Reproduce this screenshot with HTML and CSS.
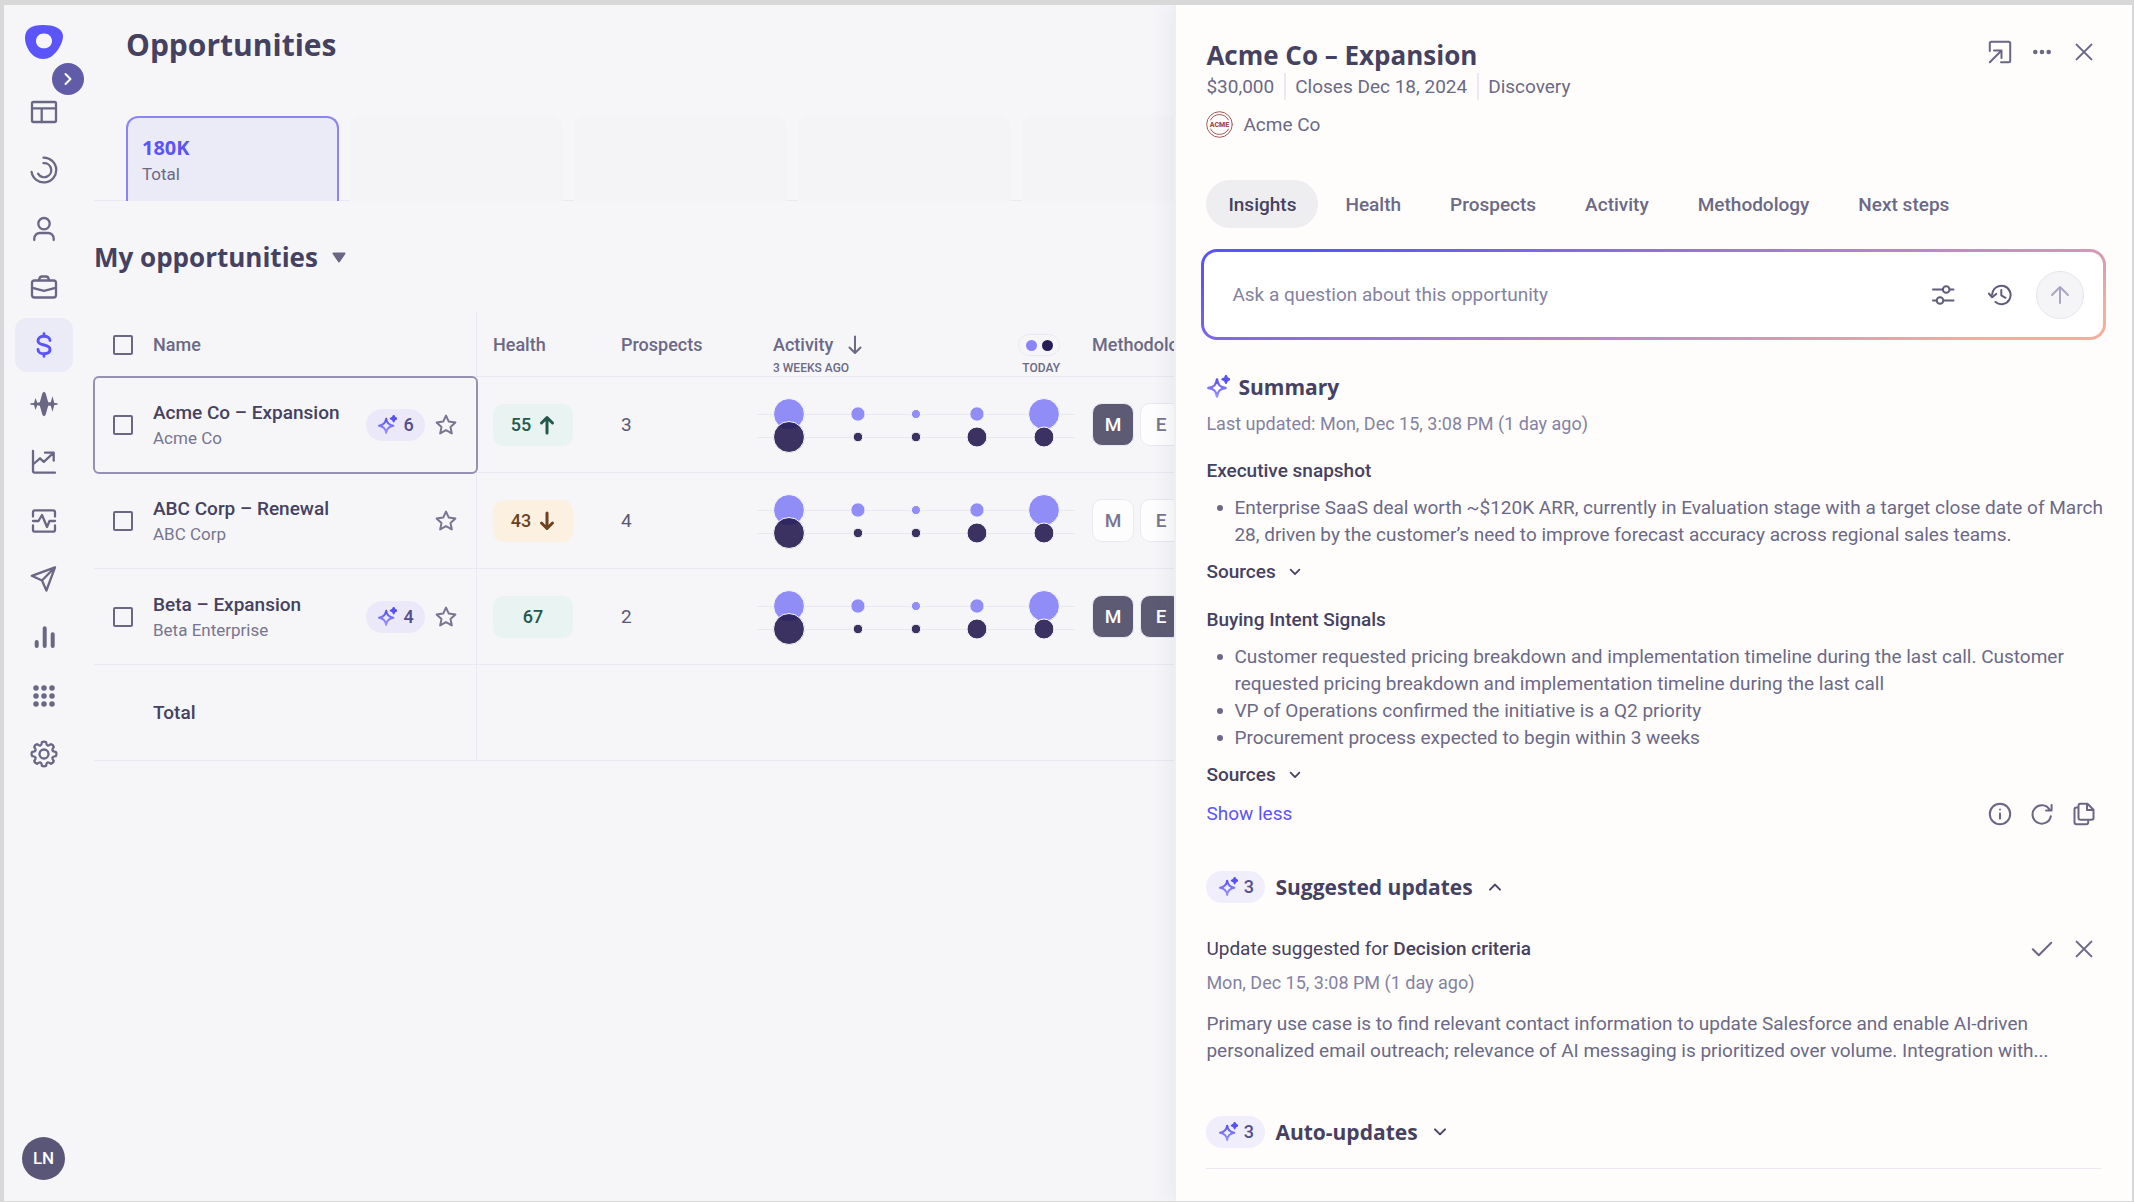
FILE: index.html
```html
<!DOCTYPE html>
<html lang="en">
<head>
    <meta charset="UTF-8">
    <meta name="viewport" content="width=device-width, initial-scale=1.0">
    <title>Opportunities</title>
    <link rel="stylesheet" href="styles.css">
</head>
<body>
    <!-- Shared icons -->
    <svg class="sprite" aria-hidden="true">
        <defs>
            <linearGradient id="spark-fill" x1="0" y1="0" x2="0" y2="24" gradientUnits="userSpaceOnUse">
                <stop offset="0.2" stop-color="#5951f6"/>
                <stop offset="1" stop-color="#a89ffb"/>
            </linearGradient>
        </defs>
        <symbol id="i-spark" viewBox="0 0 24 24">
            <path d="M11 4.5C11.8 10 14 12.2 19.6 13 14 13.8 11.8 16 11 21.6 10.2 16 8 13.8 2.4 13 8 12.2 10.2 10 11 4.5Z" fill="none" stroke="url(#spark-fill)" stroke-width="2.4" stroke-linejoin="round"/>
            <path d="M20 .6Q20.6 3.7 23.7 4.3 20.6 4.9 20 8 19.4 4.9 16.3 4.3 19.4 3.7 20 .6Z" fill="#5951f6" stroke="#5951f6" stroke-linejoin="round"/>
        </symbol>
        <symbol id="i-star" viewBox="0 0 24 24">
            <path d="M12 2.6l2.8 6 6.6.8-4.9 4.5 1.3 6.5-5.8-3.2-5.8 3.2 1.3-6.5L2.6 9.4l6.6-.8z"/>
        </symbol>
        <symbol id="i-close" viewBox="0 0 24 24"><path d="M4.6 4.6l14.8 14.8M19.4 4.6L4.6 19.4"/></symbol>
        <symbol id="i-down" viewBox="0 0 16 16"><path d="M3 5.4l5 5 5-5"/></symbol>
        <symbol id="i-up" viewBox="0 0 16 16"><path d="M3 10.6l5-5 5 5"/></symbol>
        <symbol id="i-activity" viewBox="0 0 318 60">
            <path d="M0 19.5h318M0 42.5h318" stroke="#e8e8f0"/>
            <g fill="#918df7" stroke="#f9f9fc">
                <circle cx="32" cy="19" r="15.5"/>
                <circle cx="101" cy="19" r="7.2"/>
                <circle cx="159" cy="19" r="4.6"/>
                <circle cx="220" cy="19" r="7.2"/>
                <circle cx="287" cy="19" r="15.5"/>
            </g>
            <g fill="#3b3262" stroke="#f9f9fc">
                <circle cx="32" cy="42" r="15.5"/>
                <circle cx="101" cy="42" r="4.8"/>
                <circle cx="159" cy="42" r="4.8"/>
                <circle cx="220" cy="42" r="10"/>
                <circle cx="287" cy="42" r="10"/>
            </g>
            <path d="M22 31.5a15 15 0 0 1 20 0q-10 5-20 0z" fill="#2f2763" stroke="none"/>
        </symbol>
    </svg>

    <div class="app">
        <aside class="sidebar">
            <a href="#" class="logo" aria-label="Home">
                <svg width="38" height="34" viewBox="0 0 38 34"><path fill="#5b54f8" fill-rule="evenodd" d="M0 13C0 4 6 0 18 0c10 0 20 3 20 11 0 5-3 11-6 15-4 5-8 8-14 8C7 34 0 22 0 13Zm11 3c0 4 3 7.300 8 7.300s8-3.300 8-7.300-3-7.500-8-7.500-8 3.500-8 7.500Z"/></svg>
            </a>
            <button type="button" class="expand-btn" aria-label="Expand menu">
                <svg width="16" height="16" viewBox="0 0 16 16"><path d="M5.500 3l5 5-5 5"/></svg>
            </button>
            <nav class="nav">
                <a href="#" aria-label="Dashboard"><svg viewBox="0 0 28 28"><rect x="2" y="4" width="24" height="20" rx="1.500"/><path d="M2 10.300h24M11.700 10.300V24"/></svg></a>
                <a href="#" aria-label="Goals"><svg viewBox="0 0 28 28"><path d="M13.500 1.600A12.400 12.400 0 1 1 1.600 15.800M13.500 7.200A7 7 0 1 1 8.200 17.800"/></svg></a>
                <a href="#" aria-label="People"><svg viewBox="0 0 28 28"><circle cx="14" cy="8.700" r="5.700"/><path d="M4.300 25v-1.500a5.500 5.500 0 0 1 5.500-5.500h8.400a5.500 5.500 0 0 1 5.500 5.500V25"/></svg></a>
                <a href="#" aria-label="Accounts"><svg viewBox="0 0 28 28"><rect x="2" y="7.500" width="24" height="17" rx="2.500"/><path d="M9 7q.5-3.500 3-3.500h4q2.500 0 3 3.500M2.500 14.800L14 17.800l11.500-3"/></svg></a>
                <a href="#" class="active" aria-label="Opportunities" aria-current="page"><svg viewBox="0 0 28 28"><path stroke-width="2.900" d="M14 2.800v2.500M14 22.700v2.500M20 9.600C20 7 17.500 5.300 14 5.300S8 7 8 9.700s2.500 3.600 6 4.300 6 1.800 6 4.500-2.500 4.200-6 4.200-6-1.700-6-4.300"/></svg></a>
                <a href="#" aria-label="Conversations"><svg viewBox="0 0 28 28"><path class="solid" d="M.5 13.300L4 13 5.500 8 7.300 12.800 9.800 12.300 12.300 3.500Q14 0 15.700 3.500L18.200 12.300 20.700 12.300 22.500 6.300 24.300 13 27.500 13.300V14.700L24.300 15 22.500 21.700 20.700 15.700 18.200 15.700 15.700 24.500Q14 28 12.300 24.500L9.800 15.700 7.300 15.200 5.500 20 4 15 .5 14.700Z"/></svg></a>
                <a href="#" aria-label="Forecast"><svg viewBox="0 0 28 28"><path d="M3 3v19.700q0 2 2 2h20M3.500 16l6.500-5.700 3.800 3.500L23.700 4.700M15 4.700h8.700v8"/></svg></a>
                <a href="#" aria-label="Deals"><svg viewBox="0 0 28 28"><path d="M3 9.500V5.300q0-2 2-2h18q2 0 2 2v4.200M3 18.500v4.200q0 2 2 2h18q2 0 2-2v-4.200M3 14h5.500L12 8l5 12 2.500-6H25"/></svg></a>
                <a href="#" aria-label="Outreach"><svg viewBox="0 0 28 28"><path d="M25 2.300L1.800 10.800 12 15.500l4.400 10zM25 2.300L12 15.500"/></svg></a>
                <a href="#" aria-label="Reports"><svg viewBox="0 0 28 28"><path stroke-width="4" d="M6.700 19v4M14.700 5.300V23M22.700 11.300V23"/></svg></a>
                <a href="#" aria-label="Apps"><svg viewBox="0 0 28 28"><path stroke-width="5.500" d="M6 6h0M14 6h0M22 6h0M6 14h0M14 14h0M22 14h0M6 22h0M14 22h0M22 22h0"/></svg></a>
                <a href="#" aria-label="Settings"><svg viewBox="0 0 28 28"><path d="M11.900 2.200A4 4 0 0 1 16.100 2.200Q16.500 7.800 20.900 4.200A4 4 0 0 1 23.800 7.100Q20.200 11.500 25.800 11.900A4 4 0 0 1 25.800 16.100Q20.200 16.500 23.800 20.900A4 4 0 0 1 20.900 23.800Q16.500 20.200 16.100 25.800A4 4 0 0 1 11.900 25.800Q11.500 20.200 7.100 23.800A4 4 0 0 1 4.200 20.900Q7.800 16.500 2.200 16.100A4 4 0 0 1 2.200 11.900Q7.800 11.500 4.200 7.100A4 4 0 0 1 7.100 4.200Q11.500 7.800 11.900 2.200Z"/><circle cx="14" cy="14" r="4.500"/></svg></a>
            </nav>
            <button type="button" class="avatar">LN</button>
        </aside>

        <main class="main">
            <h1>Opportunities</h1>
            <div class="cards">
                <div class="card active">
                    <strong>180K</strong>
                    <span>Total</span>
                </div>
                <div class="card"></div>
                <div class="card"></div>
                <div class="card"></div>
                <div class="card"></div>
            </div>

            <h2>
                <button type="button" class="view-btn">My opportunities
                    <svg width="14" height="11" viewBox="0 0 14 11"><path d="M1.500 1.500h11L7 9.500z"/></svg>
                </button>
            </h2>

            <table>
                <colgroup>
                    <col class="col-name"><col class="col-health"><col class="col-prospects"><col class="col-activity"><col>
                </colgroup>
                <thead>
                    <tr>
                        <th class="name-cell">
                            <div class="name-wrap">
                                <input type="checkbox" aria-label="Select all">
                                <span>Name</span>
                            </div>
                        </th>
                        <th>Health</th>
                        <th>Prospects</th>
                        <th>
                            <div class="activity-head">
                                <span>Activity</span>
                                <svg width="16" height="20" viewBox="0 0 16 20"><path d="M8 1.500v16M2.500 12.500L8 18l5.500-5.500"/></svg>
                                <button type="button" class="legend" aria-label="Toggle activity"><i></i><i></i></button>
                            </div>
                            <div class="activity-scale"><span>3 WEEKS AGO</span><span>TODAY</span></div>
                        </th>
                        <th>Methodology</th>
                    </tr>
                </thead>
                <tbody>
                    <tr>
                        <td class="name-cell selected">
                            <div class="name-wrap">
                                <input type="checkbox" aria-label="Select Acme Co – Expansion">
                                <div class="deal"><strong>Acme Co – Expansion</strong><span>Acme Co</span></div>
                                <span class="pill"><svg><use href="#i-spark"/></svg>6</span>
                                <button type="button" class="star" aria-label="Favorite"><svg><use href="#i-star"/></svg></button>
                            </div>
                        </td>
                        <td><span class="health good">55 <svg viewBox="0 0 16 20"><path d="M8 18V2.500M2.500 8L8 2.500 13.500 8"/></svg></span></td>
                        <td class="count">3</td>
                        <td class="activity-cell"><svg><use href="#i-activity"/></svg></td>
                        <td><div class="chips"><span class="chip on">M</span><span class="chip">E</span></div></td>
                    </tr>
                    <tr>
                        <td class="name-cell">
                            <div class="name-wrap">
                                <input type="checkbox" aria-label="Select ABC Corp – Renewal">
                                <div class="deal"><strong>ABC Corp – Renewal</strong><span>ABC Corp</span></div>
                                <button type="button" class="star" aria-label="Favorite"><svg><use href="#i-star"/></svg></button>
                            </div>
                        </td>
                        <td><span class="health warn">43 <svg viewBox="0 0 16 20"><path d="M8 2v15.500M2.500 12L8 17.500l5.500-5.500"/></svg></span></td>
                        <td class="count">4</td>
                        <td class="activity-cell"><svg><use href="#i-activity"/></svg></td>
                        <td><div class="chips"><span class="chip">M</span><span class="chip">E</span></div></td>
                    </tr>
                    <tr>
                        <td class="name-cell">
                            <div class="name-wrap">
                                <input type="checkbox" aria-label="Select Beta – Expansion">
                                <div class="deal"><strong>Beta – Expansion</strong><span>Beta Enterprise</span></div>
                                <span class="pill"><svg><use href="#i-spark"/></svg>4</span>
                                <button type="button" class="star" aria-label="Favorite"><svg><use href="#i-star"/></svg></button>
                            </div>
                        </td>
                        <td><span class="health good">67</span></td>
                        <td class="count">2</td>
                        <td class="activity-cell"><svg><use href="#i-activity"/></svg></td>
                        <td><div class="chips"><span class="chip on">M</span><span class="chip on">E</span></div></td>
                    </tr>
                    <tr>
                        <td class="name-cell total"><strong>Total</strong></td>
                        <td></td>
                        <td></td>
                        <td></td>
                        <td></td>
                    </tr>
                </tbody>
            </table>
        </main>

        <section class="panel">
            <header class="panel-header">
                <div>
                    <h2>Acme Co – Expansion</h2>
                    <ul class="meta">
                        <li>$30,000</li>
                        <li>Closes Dec 18, 2024</li>
                        <li>Discovery</li>
                    </ul>
                    <div class="account">
                        <svg width="27" height="27" viewBox="0 0 27 27">
                            <circle cx="13.500" cy="13.500" r="12.800"/>
                            <path d="M4.500 9a10.200 10.200 0 0 1 18 0M4.500 18a10.200 10.200 0 0 0 18 0"/>
                            <text x="13.500" y="16" text-anchor="middle">ACME</text>
                        </svg>
                        Acme Co
                    </div>
                </div>
                <div class="actions">
                    <button type="button" aria-label="Open record"><svg viewBox="0 0 24 24"><path d="M1.800 11V3.300q0-1.500 1.500-1.500h17.400q1.500 0 1.500 1.500v17.400q0 1.500-1.500 1.500H13M1.800 22.200L13.500 10.500M6 10.500h7.500V18"/></svg></button>
                    <button type="button" aria-label="More"><svg viewBox="0 0 24 24"><path stroke-width="4.600" d="M5.300 12h0M12 12h0M18.700 12h0"/></svg></button>
                    <button type="button" aria-label="Close"><svg><use href="#i-close"/></svg></button>
                </div>
            </header>

            <div class="tabs" role="tablist">
                <button type="button" role="tab" class="active" aria-selected="true">Insights</button>
                <button type="button" role="tab">Health</button>
                <button type="button" role="tab">Prospects</button>
                <button type="button" role="tab">Activity</button>
                <button type="button" role="tab">Methodology</button>
                <button type="button" role="tab">Next steps</button>
            </div>

            <form class="ask">
                <input type="text" placeholder="Ask a question about this opportunity" aria-label="Ask a question about this opportunity">
                <button type="button" aria-label="Filters"><svg viewBox="0 0 24 24"><path d="M2 6.500h9.500M19 6.500h3.500M2 17.500h3.500M13 17.500h9.500"/><circle cx="15.200" cy="6.500" r="3.300"/><circle cx="9" cy="17.500" r="3.300"/></svg></button>
                <button type="button" aria-label="History"><svg viewBox="0 0 24 24"><path d="M4.200 11.500A9.200 9.200 0 1 1 7.500 19M.8 10.500l3.400 3.800 4-3.400M13.300 7v5.300l4.200 2.500"/></svg></button>
                <button type="submit" class="send" aria-label="Send"><svg viewBox="0 0 24 24"><path d="M12 20V4M4 12l8-8 8 8"/></svg></button>
            </form>

            <h3 class="summary-title"><svg><use href="#i-spark"/></svg>Summary</h3>
            <p class="date">Last updated: Mon, Dec 15, 3:08 PM (1 day ago)</p>

            <h4>Executive snapshot</h4>
            <ul class="points">
                <li>Enterprise SaaS deal worth ~$120K ARR, currently in Evaluation stage with a target close date of March 28, driven by the customer’s need to improve forecast accuracy across regional sales teams.</li>
            </ul>
            <button type="button" class="sources">Sources <svg><use href="#i-down"/></svg></button>

            <h4>Buying Intent Signals</h4>
            <ul class="points">
                <li>Customer requested pricing breakdown and implementation timeline during the last call. Customer requested pricing breakdown and implementation timeline during the last call</li>
                <li>VP of Operations confirmed the initiative is a Q2 priority</li>
                <li>Procurement process expected to begin within 3 weeks</li>
            </ul>
            <button type="button" class="sources">Sources <svg><use href="#i-down"/></svg></button>

            <div class="summary-footer">
                <a href="#">Show less</a>
                <div class="actions">
                    <button type="button" aria-label="Info"><svg viewBox="0 0 24 24"><circle cx="12" cy="12" r="10.200"/><path d="M12 11.500v5M12 7.500h0"/></svg></button>
                    <button type="button" aria-label="Refresh"><svg viewBox="0 0 24 24"><path d="M20.800 14.200A9.200 9.200 0 1 1 19.500 7.500M21.600 3v5.500h-5.500"/></svg></button>
                    <button type="button" aria-label="Copy"><svg viewBox="0 0 24 24"><path d="M8.500 1.800h7l6 6v8q0 2-2 2h-11q-2 0-2-2v-12q0-2 2-2zM15 2v6h6M6.500 5.500H4.500q-2 0-2 2v12.700q0 2 2 2h9.700q2 0 2-2v-1.700"/></svg></button>
                </div>
            </div>

            <h3 class="group-title"><span class="pill"><svg><use href="#i-spark"/></svg>3</span><button type="button">Suggested updates <svg><use href="#i-up"/></svg></button></h3>
            <div class="update">
                <div class="update-head">
                    <p>Update suggested for <strong>Decision criteria</strong></p>
                    <div class="actions">
                        <button type="button" aria-label="Accept"><svg viewBox="0 0 24 24"><path d="M2.800 12.200l6 6L21.200 5.800"/></svg></button>
                        <button type="button" aria-label="Dismiss"><svg><use href="#i-close"/></svg></button>
                    </div>
                </div>
                <p class="date">Mon, Dec 15, 3:08 PM (1 day ago)</p>
                <p class="update-text">Primary use case is to find relevant contact information to update Salesforce and enable AI-driven personalized email outreach; relevance of AI messaging is prioritized over volume. Integration with...</p>
            </div>

            <h3 class="group-title last"><span class="pill"><svg><use href="#i-spark"/></svg>3</span><button type="button">Auto-updates <svg><use href="#i-down"/></svg></button></h3>
        </section>
    </div>
</body>
</html>
```
FILE: styles.css
```css
:root {
    --ink: #454161;
    --text: #6b6986;
    --muted: #8482a0;
    --line: #e9e9f1;
    --accent: #5b54f8;
    --bg: #f6f6f9;
    --heading: "Open Sans", "Noto Sans", sans-serif;
}

* {
    margin: 0;
    padding: 0;
    box-sizing: border-box;
}

body {
    background: #d8d8d8;
    color: var(--text);
    font-family: Roboto, "Liberation Sans", sans-serif;
    font-size: 19px;
    line-height: 27px;
    min-height: 100vh;
    padding: 5px 2px 1px 4px;
    display: flex;
}

button {
    background: none;
    border: none;
    color: inherit;
    font: inherit;
    cursor: pointer;
}

a {
    color: var(--accent);
    text-decoration: none;
}

ul {
    list-style: none;
}

strong {
    font-weight: 500;
}

svg {
    display: block;
    flex: none;
    fill: none;
    stroke: currentColor;
    stroke-width: 2;
    stroke-linecap: round;
    stroke-linejoin: round;
}

.sprite {
    position: absolute;
    width: 0;
    height: 0;
}

.app {
    flex: 1;
    display: flex;
    background: var(--bg);
    overflow: hidden;
}

/* Sidebar */
.sidebar {
    position: relative;
    flex: 0 0 79px;
    display: flex;
    flex-direction: column;
    align-items: center;
    padding: 20px 0 21px;
}

.logo svg {
    stroke: none;
}

.expand-btn {
    position: absolute;
    top: 58px;
    left: 48px;
    width: 32px;
    height: 32px;
    border-radius: 50%;
    background: #605ca8;
    color: white;
    display: flex;
    align-items: center;
    justify-content: center;
}

.nav {
    margin-top: 26px;
    height: 696px;
    display: flex;
    flex-direction: column;
    justify-content: space-between;
}

.nav a {
    width: 58px;
    height: 54px;
    border-radius: 12px;
    color: #6a6785;
    display: flex;
    align-items: center;
    justify-content: center;
}

.nav a.active {
    background: #ebebf8;
    color: var(--accent);
}

.nav svg {
    width: 28px;
    height: 28px;
    stroke-width: 2.3;
}

.nav .solid {
    fill: currentColor;
    stroke: none;
}

.avatar {
    margin-top: auto;
    width: 43px;
    height: 43px;
    border-radius: 50%;
    background: #595678;
    color: white;
    font-size: 17px;
    font-weight: 500;
}

/* Main */
.main {
    flex: 1;
    min-width: 0;
    overflow: hidden;
    padding: 19px 0 0 11px;
}

h1 {
    color: var(--ink);
    font-family: var(--heading);
    font-size: 30px;
    font-weight: 700;
    line-height: 42px;
    padding-left: 32px;
}

.cards {
    margin-top: 50px;
    padding-left: 32px;
    display: flex;
    gap: 11px;
    box-shadow: inset 0 -1px var(--line);
}

.card {
    flex: 0 0 213px;
    height: 85px;
    background: #f4f4f6;
    border-radius: 12px 12px 0 0;
}

.card.active {
    background: #ebebf8;
    border: 2px solid #8a84f9;
    border-bottom: none;
    padding: 16px 14px;
    display: flex;
    flex-direction: column;
}

.card strong {
    color: var(--accent);
    font-family: var(--heading);
    font-size: 20px;
    font-weight: 700;
    line-height: 28px;
}

.card span {
    font-size: 17px;
    line-height: 24px;
}

.main h2 {
    margin-top: 38px;
}

.view-btn,
.panel-header h2 {
    color: var(--ink);
    font-family: var(--heading);
    font-size: 26px;
    font-weight: 700;
    line-height: 36px;
}

.view-btn {
    display: flex;
    align-items: center;
    gap: 14px;
}

.view-btn svg {
    fill: #6a6785;
    stroke: #6a6785;
}

table {
    width: 100%;
    margin-top: 37px;
    table-layout: fixed;
    border-collapse: separate;
    border-spacing: 0;
}

.col-name { width: 383px; }
.col-health { width: 128px; }
.col-prospects { width: 152px; }
.col-activity { width: 319px; }

th,
td {
    border-bottom: 1px solid var(--line);
    padding: 0 0 0 16px;
    text-align: left;
    white-space: nowrap;
    overflow: hidden;
}

th {
    height: 65px;
    padding-top: 21px;
    vertical-align: top;
    font-size: 18px;
    font-weight: 500;
    line-height: 24px;
}

td {
    height: 96px;
    vertical-align: middle;
}

.name-cell {
    border-right: 1px solid var(--line);
    padding-left: 19px;
    padding-right: 18px;
}

.name-cell.selected {
    border-radius: 5px;
    outline: 2px solid #9492b0;
    outline-offset: -1px;
}

.name-cell.total {
    padding-left: 59px;
}

.name-cell strong {
    color: var(--ink);
}

.name-wrap {
    display: flex;
    align-items: center;
}

input[type="checkbox"] {
    appearance: none;
    width: 20px;
    height: 20px;
    margin-right: 20px;
    border: 2px solid #6a6785;
    border-radius: 2px;
}

.deal {
    flex: 1;
    display: flex;
    flex-direction: column;
}

.deal span {
    color: #77758f;
    font-size: 17px;
    line-height: 24px;
}

.pill {
    width: 59px;
    height: 32px;
    border-radius: 16px;
    background: #ebe9f9;
    color: #524d8c;
    font-family: Roboto, "Liberation Sans", sans-serif;
    font-size: 18px;
    font-weight: 500;
    display: flex;
    align-items: center;
    justify-content: center;
    gap: 6px;
}

.pill svg {
    width: 20px;
    height: 20px;
}

.star {
    margin-left: 9px;
    color: #77758f;
}

.star svg {
    width: 24px;
    height: 24px;
}

.health {
    width: 80px;
    height: 42px;
    border-radius: 10px;
    font-size: 18px;
    font-weight: 500;
    display: flex;
    align-items: center;
    justify-content: center;
    gap: 8px;
}

.health svg {
    width: 16px;
    height: 20px;
    stroke-width: 3;
}

.good {
    background: #e9f3f1;
    color: #23594b;
}

.warn {
    background: #fcf1e1;
    color: #6b4120;
}

.count {
    color: #5a5776;
}

.activity-head {
    display: flex;
    align-items: center;
    height: 24px;
    padding-right: 16px;
}

.activity-head svg {
    margin-left: 14px;
}

.legend {
    margin-left: auto;
    width: 42px;
    height: 22px;
    border: 1px solid var(--line);
    border-radius: 11px;
    display: flex;
    align-items: center;
    justify-content: center;
    gap: 5px;
}

.legend i {
    width: 11px;
    height: 11px;
    border-radius: 50%;
    background: #8a84f9;
}

.legend i + i {
    background: #281e57;
}

.activity-scale {
    display: flex;
    justify-content: space-between;
    margin-top: 4px;
    padding-right: 16px;
    font-size: 12px;
    line-height: 14px;
}

.activity-cell {
    padding-left: 0;
}

.activity-cell svg {
    width: 318px;
    height: 60px;
    stroke-width: 1;
}

.chips {
    display: flex;
    gap: 6px;
}

.chip {
    flex: 0 0 42px;
    height: 43px;
    border: 1px solid var(--line);
    border-radius: 10px;
    background: #fdfdfe;
    color: #77758f;
    font-weight: 500;
    display: flex;
    align-items: center;
    justify-content: center;
}

.chip.on {
    background: #5d5b73;
    color: white;
}

/* Panel */
.panel {
    position: relative;
    flex: 0 0 45%;
    border-left: 2px solid #ededf4;
    background: #fefdfc;
    box-shadow: -4px 0 20px rgba(60, 56, 100, 0.08);
    padding: 32px 31px 32px 30px;
}

.panel-header {
    display: flex;
    justify-content: space-between;
    align-items: flex-start;
}

.meta {
    display: flex;
}

.meta li + li {
    border-left: 2px solid var(--line);
    margin-left: 10px;
    padding-left: 9px;
}

.account {
    display: flex;
    align-items: center;
    gap: 10px;
    margin-top: 11px;
}

.account svg {
    stroke: #a05a57;
    stroke-width: 1;
}

.account text {
    fill: #9c4a48;
    stroke: none;
    font-size: 7px;
    font-weight: 900;
}

.actions {
    display: flex;
    gap: 18px;
    padding-right: 5px;
    color: #6a6785;
}

.actions svg,
.ask svg {
    width: 24px;
    height: 24px;
}

.panel-header .actions {
    padding-top: 3px;
}

.tabs {
    display: flex;
    gap: 5px;
    margin-top: 42px;
}

.tabs button {
    height: 48px;
    padding: 0 22px;
    border-radius: 24px;
    font-weight: 500;
}

.tabs .active {
    background: #eeeef1;
    color: var(--ink);
}

.ask {
    display: flex;
    align-items: center;
    height: 91px;
    margin: 21px -5px 0;
    padding: 0 19px 0 28px;
    border: 3px solid transparent;
    border-radius: 16px;
    background: linear-gradient(#fff, #fff) padding-box,
        linear-gradient(165deg, #5b54f8 10%, #f5ada0 90%) border-box;
    color: #5f5c7c;
}

.ask input {
    flex: 1;
    min-width: 0;
    border: none;
    outline: none;
    background: none;
    font: inherit;
}

.ask input::placeholder {
    color: var(--muted);
}

.ask button {
    margin-left: 33px;
}

.ask .send {
    width: 48px;
    height: 48px;
    margin-left: 24px;
    border: 1px solid #e6e5ef;
    border-radius: 50%;
    background: #f5f5f7;
    color: #a9a6c2;
    display: flex;
    align-items: center;
    justify-content: center;
}

h3,
.group-title button {
    color: var(--ink);
    font-family: var(--heading);
    font-size: 21px;
    font-weight: 700;
    line-height: 30px;
    display: flex;
    align-items: center;
}

.summary-title {
    gap: 8px;
    margin-top: 32px;
}

.summary-title svg {
    width: 24px;
    height: 24px;
}

.date {
    margin-top: 10px;
    color: var(--muted);
    font-size: 18px;
    line-height: 24px;
}

h4 {
    margin-top: 21px;
    color: var(--ink);
    font-weight: 500;
}

.points {
    margin: 10px -10px 0 0;
}

.points li {
    position: relative;
    padding-left: 28px;
}

.points li::before {
    content: "";
    position: absolute;
    top: 11px;
    left: 11px;
    width: 6px;
    height: 6px;
    border-radius: 50%;
    background: var(--text);
}

.sources {
    display: flex;
    align-items: center;
    gap: 12px;
    margin-top: 10px;
    color: var(--ink);
    font-weight: 500;
}

.sources svg {
    width: 14px;
    height: 14px;
}

.summary-footer,
.update-head {
    display: flex;
    align-items: center;
    justify-content: space-between;
    margin-top: 12px;
}

.group-title {
    gap: 10px;
    height: 32px;
    margin-top: 44px;
}

.group-title button {
    gap: 14px;
}

.group-title button svg {
    width: 16px;
    height: 16px;
}

.panel .pill {
    background: #f0eefb;
}

.update-head {
    margin-top: 32px;
    color: var(--ink);
}

.update .date {
    margin-top: 9px;
}

.update-text {
    margin-top: 15px;
}

.group-title.last {
    height: 53px;
    margin-top: 52px;
    padding-bottom: 20px;
    border-bottom: 1px solid var(--line);
}
```
